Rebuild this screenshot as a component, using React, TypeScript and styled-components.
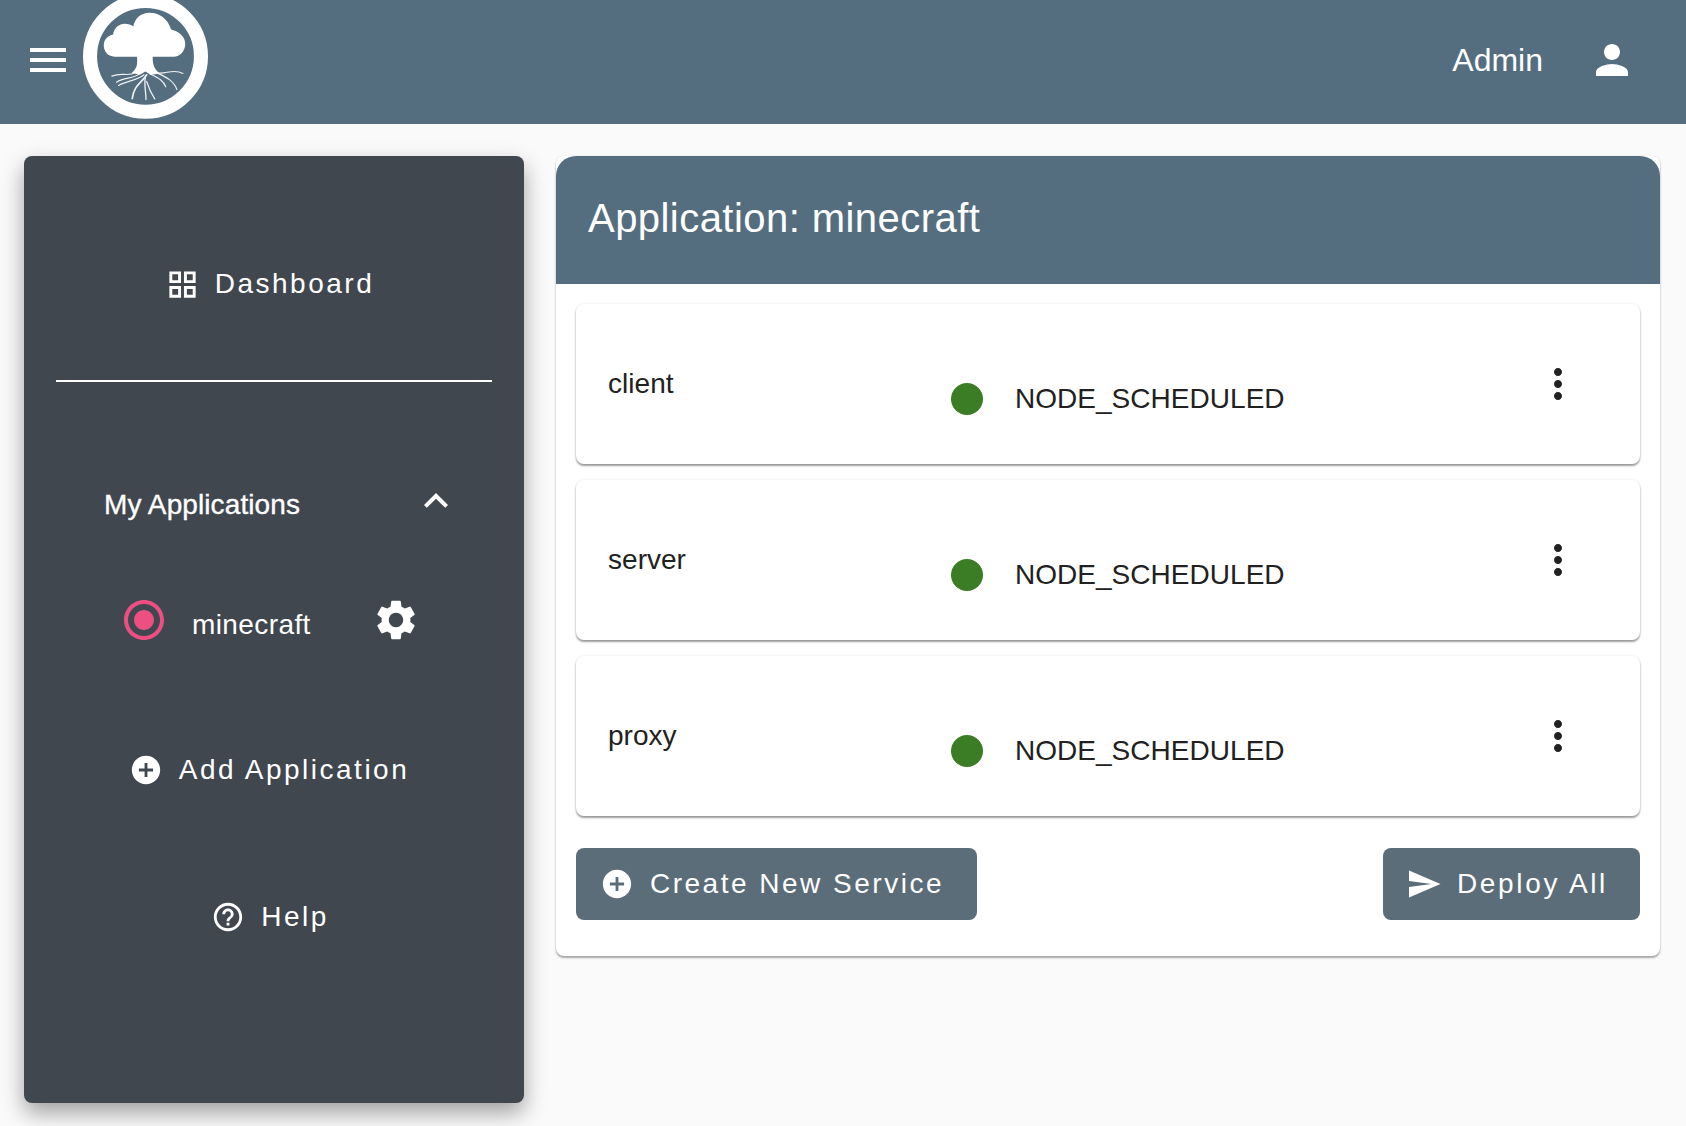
import React from "react";
import styled, { createGlobalStyle } from "styled-components";
import {
  MdAddCircle,
  MdExpandLess,
  MdHelpOutline,
  MdMenu,
  MdMoreVert,
  MdOutlineGridView,
  MdPerson,
  MdRadioButtonChecked,
  MdSend,
  MdSettings,
} from "react-icons/md";

const GlobalStyle = createGlobalStyle`
  html, body {
    margin: 0;
    padding: 0;
    background: #fafafa;
    font-family: "Liberation Sans", Arial, sans-serif;
  }
  * {
    box-sizing: border-box;
  }
`;

const Page = styled.div`
  width: 1686px;
  height: 1126px;
  overflow: hidden;
`;

const Header = styled.header`
  height: 124px;
  background: #546e80;
  color: #fff;
  display: flex;
  align-items: center;
  padding: 0 36px 4px 24px;
`;

const MenuIcon = styled(MdMenu)`
  font-size: 48px;
  margin-right: 11px;
`;

const LogoMark = styled.svg`
  width: 125px;
  height: 125px;
  margin-top: -8px;
  flex: none;
`;

const UserName = styled.span`
  margin-left: auto;
  font-size: 32px;
`;

const UserIcon = styled(MdPerson)`
  font-size: 48px;
  margin-left: 45px;
  margin-right: 14px;
`;

const Content = styled.main`
  display: flex;
  align-items: flex-start;
  gap: 32px;
  padding: 32px 26px 0 24px;
`;

const Sidebar = styled.aside`
  width: 500px;
  height: 947px;
  flex: none;
  background: #40474f;
  color: #fff;
  border-radius: 8px;
  padding-top: 92px;
  box-shadow: 0 10px 22px rgba(0, 0, 0, 0.36);
`;

const NavItem = styled.div<{ $top?: number; $shift?: number; $gap?: number }>`
  height: 72px;
  margin-top: ${({ $top }) => $top ?? 0}px;
  padding-right: ${({ $shift }) => $shift ?? 8}px;
  display: flex;
  align-items: center;
  justify-content: center;
  gap: ${({ $gap }) => $gap ?? 16}px;
  font-size: 28px;
  letter-spacing: 2.5px;
`;

const Divider = styled.hr`
  height: 2px;
  margin: 60px 32px 0;
  border: 0;
  background: #fff;
`;

const GroupHeader = styled.div`
  height: 56px;
  margin-top: 95px;
  padding: 0 64px 0 80px;
  display: flex;
  justify-content: space-between;
  align-items: flex-start;
`;

const GroupTitle = styled.span`
  margin-top: 12px;
  font-size: 28px;
  letter-spacing: 0.1px;
  -webkit-text-stroke: 0.35px #fff;
`;

const GroupToggle = styled(MdExpandLess)`
  font-size: 48px;
`;

const AppRow = styled.div`
  height: 48px;
  margin-top: 63px;
  padding: 0 104px 0 96px;
  display: flex;
  align-items: center;
`;

const AppRadio = styled(MdRadioButtonChecked)`
  font-size: 48px;
  color: #ed4f81;
`;

const AppName = styled.span`
  margin: 10px 0 0 24px;
  font-size: 28px;
  letter-spacing: 0.4px;
`;

const AppSettings = styled(MdSettings)`
  font-size: 48px;
  margin-left: auto;
`;

const MainCard = styled.section`
  flex: 1;
  background: #fff;
  border-radius: 8px;
  box-shadow: 0 2px 2px rgba(0, 0, 0, 0.32), 0 0 3px rgba(0, 0, 0, 0.08);
`;

const CardTitle = styled.h1`
  height: 128px;
  margin: 0;
  padding: 0 32px 4px;
  display: flex;
  align-items: center;
  background: #546e80;
  border-radius: 20px 20px 0 0;
  color: #fff;
  font-size: 40px;
  font-weight: 400;
  letter-spacing: 0.45px;
`;

const CardBody = styled.div`
  padding: 20px 20px 36px;
  display: flex;
  flex-direction: column;
  gap: 16px;
`;

const ServiceCard = styled.article`
  height: 160px;
  padding: 0 58px 0 32px;
  display: grid;
  grid-template-columns: 343px 1fr auto;
  align-items: center;
  background: #fff;
  border-radius: 8px;
  color: #212121;
  font-size: 28px;
  letter-spacing: 0.03px;
  box-shadow: 0 2px 2px rgba(0, 0, 0, 0.38), 0 0 3px rgba(0, 0, 0, 0.1);
`;

const ServiceStatus = styled.div`
  margin-top: 30px;
  display: flex;
  align-items: center;
  gap: 32px;
`;

const StatusDot = styled.span`
  width: 32px;
  height: 32px;
  border-radius: 50%;
  background: #3a7d25;
`;

const MoreIcon = styled(MdMoreVert)`
  display: block;
  font-size: 48px;
`;

const Actions = styled.div`
  margin-top: 16px;
  display: flex;
  justify-content: space-between;
`;

const ActionButton = styled.button<{ $pad: string; $spacing: number; $gap: number }>`
  height: 72px;
  padding: ${({ $pad }) => $pad};
  display: flex;
  align-items: center;
  gap: ${({ $gap }) => $gap}px;
  border: 0;
  border-radius: 8px;
  background: #5b6d79;
  color: #fff;
  font-family: inherit;
  font-size: 28px;
  letter-spacing: ${({ $spacing }) => $spacing}px;
`;

const Logo = () => (
  <LogoMark viewBox="250 -9 373 373" aria-label="logo">
    <circle cx="436.5" cy="177" r="165.5" fill="none" stroke="#fff" strokeWidth="42" />
    <g fill="#fff">
      <path d="M345 178 C322 178 312 160 312 145 C312 125 325 115 340 112 C342 92 358 80 375 80 C385 80 393 83 400 88 C405 62 425 47 448 47 C478 47 503 65 513 97 C537 103 555 118 555 140 C555 160 540 178 520 178 Z" />
      <path d="M411 175 C413 200 412 212 396 226 L420 232 L436 222 L452 232 L480 228 C462 216 457 200 458 175 Z" />
    </g>
    <g fill="none" stroke="#fff" strokeLinecap="round" opacity="0.9">
      <path d="M405 226 C385 238 365 224 336 236" strokeWidth="3.5" />
      <path d="M420 228 C400 246 375 238 350 254" strokeWidth="3.5" />
      <path d="M432 232 C410 250 380 250 356 264" strokeWidth="3.5" />
      <path d="M440 232 C424 258 402 262 397 303" strokeWidth="5" />
      <path d="M436 240 C432 262 438 285 438 306" strokeWidth="4" />
      <path d="M440 252 C446 272 454 288 464 304" strokeWidth="3.5" />
      <path d="M448 228 C470 240 488 246 497 268" strokeWidth="3.5" />
      <path d="M462 222 C490 236 520 246 530 276" strokeWidth="3.5" />
      <path d="M470 226 C495 232 520 212 548 228" strokeWidth="3.5" />
    </g>
  </LogoMark>
);

const services = ["client", "server", "proxy"];

export default function App() {
  return (
    <Page>
      <GlobalStyle />
      <Header>
        <MenuIcon />
        <Logo />
        <UserName>Admin</UserName>
        <UserIcon />
      </Header>
      <Content>
        <Sidebar>
          <NavItem $shift={9} $gap={15}>
            <MdOutlineGridView size={35} />
            Dashboard
          </NavItem>
          <Divider />
          <GroupHeader>
            <GroupTitle>My Applications</GroupTitle>
            <GroupToggle />
          </GroupHeader>
          <AppRow>
            <AppRadio />
            <AppName>minecraft</AppName>
            <AppSettings />
          </AppRow>
          <NavItem $top={90} $shift={10}>
            <MdAddCircle size={34} />
            Add Application
          </NavItem>
          <NavItem $top={75}>
            <MdHelpOutline size={34} />
            Help
          </NavItem>
        </Sidebar>
        <MainCard>
          <CardTitle>Application: minecraft</CardTitle>
          <CardBody>
            {services.map((name) => (
              <ServiceCard key={name}>
                <span>{name}</span>
                <ServiceStatus>
                  <StatusDot />
                  NODE_SCHEDULED
                </ServiceStatus>
                <MoreIcon />
              </ServiceCard>
            ))}
            <Actions>
              <ActionButton $pad="0 33px 0 24px" $spacing={2.5} $gap={16}>
                <MdAddCircle size={34} />
                Create New Service
              </ActionButton>
              <ActionButton $pad="0 32px 0 23px" $spacing={2.65} $gap={15}>
                <MdSend size={36} />
                Deploy All
              </ActionButton>
            </Actions>
          </CardBody>
        </MainCard>
      </Content>
    </Page>
  );
}
